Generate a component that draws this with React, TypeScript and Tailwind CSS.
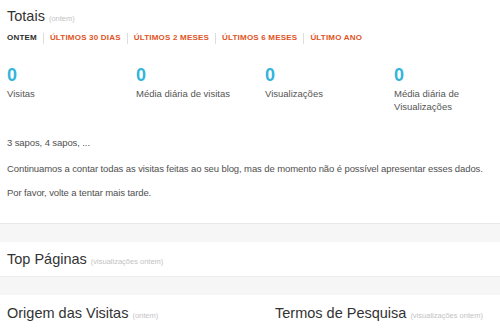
const tabs = ["Ontem", "Últimos 30 dias", "Últimos 2 meses", "Últimos 6 meses", "Último ano"];

const stats = [
  { value: 0, label: "Visitas" },
  { value: 0, label: "Média diária de visitas" },
  { value: 0, label: "Visualizações" },
  { value: 0, label: "Média diária de Visualizações" },
];

function Heading({ title, note }: { title: string; note: string }) {
  return (
    <h2 className="flex items-baseline gap-[4px] text-[14.5px] leading-none text-[#333]">
      {title}
      <span className="text-[7.5px] text-[#c3c3c3]">{note}</span>
    </h2>
  );
}

export default function App() {
  return (
    <div className="min-h-[333px] w-[500px] overflow-hidden bg-white font-['Liberation_Sans',Arial,sans-serif] text-[#3c3c3c]">
      {/* Totais */}
      <section className="px-[7px] pt-[9px] pb-[24px]">
        <Heading title="Totais" note="(ontem)" />
        <div className="mt-[9px] flex items-center text-[8px] leading-[10px] font-bold uppercase tracking-[0.2px]">
          {tabs.map((t, i) => (
            <div key={t} className="flex items-center">
              {i > 0 && <span className="mx-[6px] h-[11px] w-px bg-[#ddd]" />}
              <span className={i === 0 ? "text-[#2d2d2d]" : "text-[#dd5426]"}>{t}</span>
            </div>
          ))}
        </div>

        <div className="mt-[22px] grid grid-cols-[129px_129px_129px_1fr]">
          {stats.map((s) => (
            <div key={s.label} className="pr-4">
              <div className="text-[18px] font-bold leading-none text-[#33b5db]">{s.value}</div>
              <div className="mt-[3px] text-[9.5px] leading-[13px] text-[#555]">{s.label}</div>
            </div>
          ))}
        </div>

        <div className="mt-[23px] text-[9.5px] leading-[13px] tracking-[-0.1px] text-[#505050]">
          <p>3 sapos, 4 sapos, ...</p>
          <p className="mt-[13px]">
            Continuamos a contar todas as visitas feitas ao seu blog, mas de momento não é possível apresentar esses dados.
          </p>
          <p className="mt-[11px]">Por favor, volte a tentar mais tarde.</p>
        </div>
      </section>

      <div className="h-[19px] border-t border-[#e8e8e8] bg-[#f6f6f6]" />

      {/* Top Páginas */}
      <section className="flex h-[35px] items-center border-b border-[#ececec] px-[7px] pt-[1px]">
        <Heading title="Top Páginas" note="(visualizações ontem)" />
      </section>

      <div className="h-[18px] bg-[#f6f6f6]" />

      {/* Origem / Termos */}
      <section className="grid grid-cols-[268px_1fr] px-[7px] pt-[11px] pb-4">
        <Heading title="Origem das Visitas" note="(ontem)" />
        <Heading title="Termos de Pesquisa" note="(visualizações ontem)" />
      </section>
    </div>
  );
}
